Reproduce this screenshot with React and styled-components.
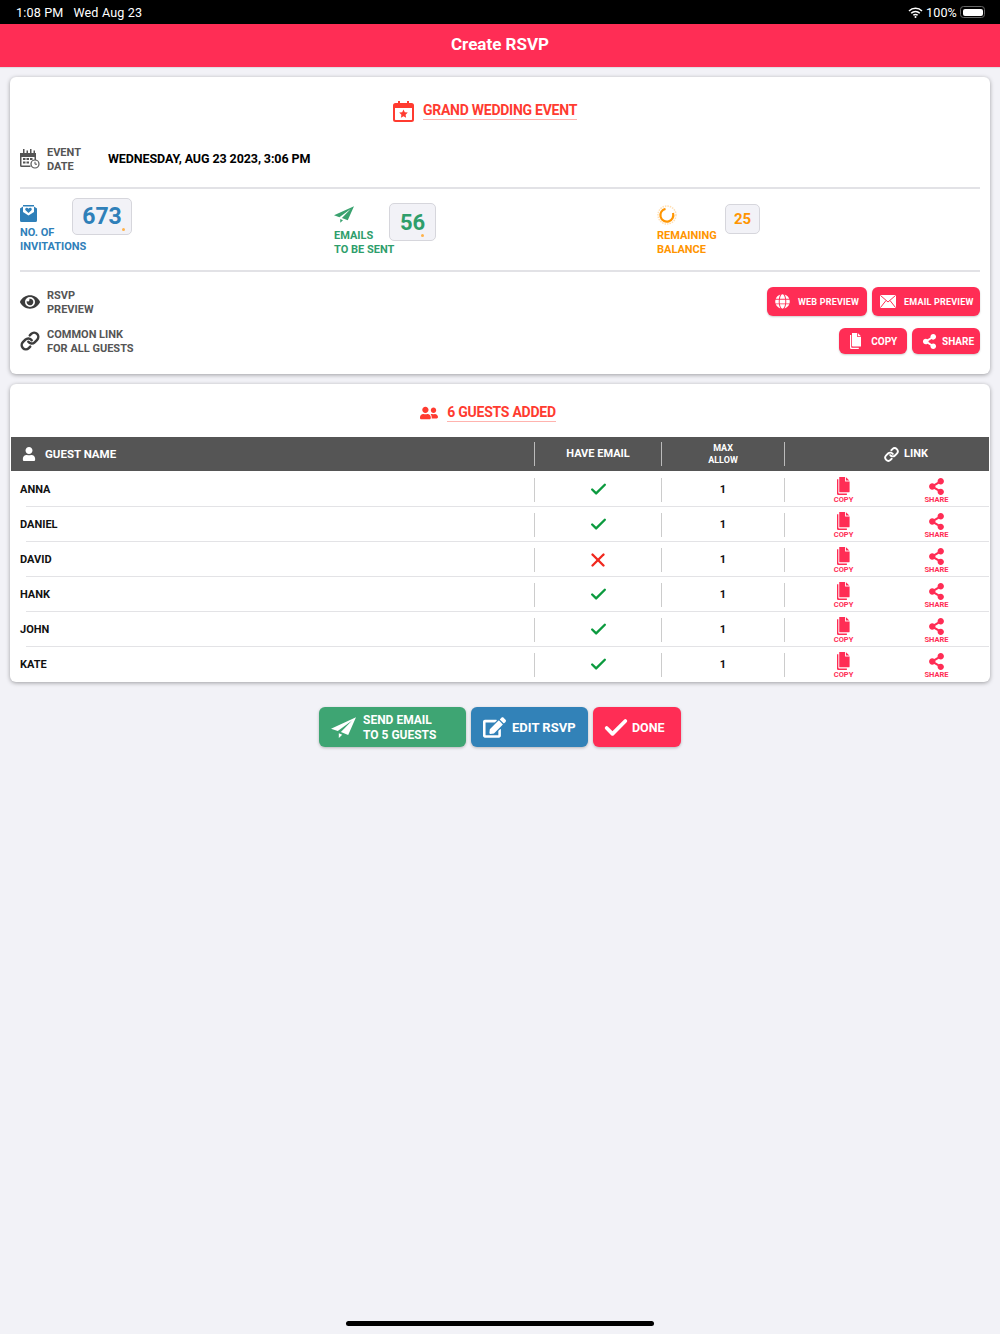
import React from 'react';
import styled, { createGlobalStyle } from 'styled-components';
import { FaEye, FaUser, FaUserFriends, FaShareAlt, FaGlobe, FaEdit } from 'react-icons/fa';
import { Check, X, Link as LinkIcon } from 'lucide-react';

const RED = '#ff2d55';
const display = `"Roboto", "Liberation Sans", sans-serif`;

const guests = [
    { name: 'ANNA', email: true },
    { name: 'DANIEL', email: true },
    { name: 'DAVID', email: false },
    { name: 'HANK', email: true },
    { name: 'JOHN', email: true },
    { name: 'KATE', email: true },
];

const PlaneIcon = ({ size, color }) => (
    <svg width={size} height={size * 0.85} viewBox="0 0 24 20">
        <path fill={color} d="M24 0 L0 11 L6.5 13.2 L20 3.5 L9.5 14.2 L16.5 17 Z M7.5 15.5 L7.5 20 L10.8 16.8 Z" />
    </svg>
);

const CalendarStarIcon = () => (
    <svg width="21" height="21" viewBox="0 0 21 21">
        <path fill="#ff3b30" d="M5 0h2v2h7V0h2v2h2.5A2.5 2.5 0 0 1 21 4.500V18.500A2.500 2.500 0 0 1 18.500 21H2.500A2.500 2.500 0 0 1 0 18.500V4.500A2.500 2.500 0 0 1 2.500 2H5zM2 7v11.500c0 .3.2.5.5.5h16c.3 0 .5-.2.5-.5V7z" />
        <path fill="#ff3b30" d="M10.500 8.500l1.300 2.700 3 .4-2.200 2.100.5 3-2.600-1.400-2.600 1.400.5-3-2.200-2.100 3-.4z" />
    </svg>
);

const CalendarClockIcon = () => (
    <svg width="20" height="20" viewBox="0 0 20 20" fill="#555">
        <rect x="3" y="0" width="1.500" height="4" />
        <rect x="6.500" y="1.500" width="1.500" height="3" />
        <rect x="10" y="0" width="1.500" height="4" />
        <rect x="13.500" y="1.500" width="1.500" height="3" />
        <path d="M0 4h16v7h-1.500V8h-13v8.500h9V18H1.500A1.500 1.500 0 0 1 0 16.500z" />
        <rect x="3" y="9" width="2.500" height="2" />
        <rect x="6.500" y="9" width="2.500" height="2" />
        <rect x="10" y="9" width="2.500" height="2" />
        <rect x="3" y="12.500" width="2.500" height="2" />
        <rect x="6.500" y="12.500" width="2.500" height="2" />
        <circle cx="15" cy="15" r="4" fill="#fff" stroke="#555" strokeWidth="1.200" />
        <path d="M15 12.800v2.400h2" fill="none" stroke="#555" strokeWidth="1" />
    </svg>
);

const InviteIcon = () => (
    <svg width="17" height="17" viewBox="0 0 17 17">
        <path fill="#2f80b9" d="M0 3.500L3 1.500V0h11v1.500l3 2V15.500A1.500 1.500 0 0 1 15.500 17H1.500A1.500 1.500 0 0 1 0 15.500z" />
        <path fill="#fff" d="M3 1.500h11v5.500L8.500 10.500 3 7z" />
        <path fill="#2f80b9" d="M8.500 8L5.600 5.300C4.700 4.300 5.400 2.800 6.700 2.800c.8 0 1.400.4 1.800 1 .4-.6 1-1 1.800-1 1.300 0 2 1.500 1.100 2.500z" />
    </svg>
);

const BalanceIcon = () => (
    <svg width="20" height="20" viewBox="0 0 20 20" fill="none">
        <circle cx="10" cy="10" r="9" stroke="#ff9500" strokeOpacity=".3" strokeWidth="1.500" strokeDasharray="1.500 1" />
        <path d="M8.500 3.800A6.500 6.500 0 1 0 16 8" stroke="#ff9500" strokeWidth="2.200" />
    </svg>
);

const CopyDocIcon = ({ size, color }) => (
    <svg width={size * 0.7} height={size} viewBox="0 0 14 20">
        <path fill={color} d="M2.500 0h6.500v5h5v11a1 1 0 0 1-1 1H3.500a1 1 0 0 1-1-1zM10 .3L13.700 4H10z" />
        <path fill={color} d="M0 2.500h1.500v15c0 .5.400 .9.900 .9H11V20H1.500A1.500 1.500 0 0 1 0 18.500z" />
    </svg>
);

const EnvelopeIcon = () => (
    <svg width="16" height="13" viewBox="0 0 16 13">
        <rect width="16" height="13" rx="1" fill="#fff" />
        <path d="M0.500 0.500L8 7l7.500-6.500M0.500 12.500L6 5.500M15.500 12.500L10 5.500" fill="none" stroke={RED} strokeWidth="1" />
    </svg>
);

function StatusBarIcons() {
    return (
        <>
            <svg width="15" height="11" viewBox="0 0 15 11">
                <path d="M1 4a9.200 9.200 0 0 1 13 0M3.200 6.200a6.100 6.100 0 0 1 8.600 0M5.300 8.300a3.100 3.100 0 0 1 4.400 0" fill="none" stroke="#fff" strokeWidth="1.500" />
                <circle cx="7.500" cy="10" r="1" fill="#fff" />
            </svg>
            <StatusText>100%</StatusText>
            <Battery><BatteryFill /></Battery>
        </>
    );
}

function Stat({ icon, color, width, textTop, iconH, boxTop, boxW, boxH, numSize, value, lines, dotRight }) {
    return (
        <StatItem>
            <StatText $width={width} $top={textTop} $color={color}>
                <StatIcon $h={iconH}>{icon}</StatIcon>
                {lines.map((l) => <div key={l}>{l}</div>)}
            </StatText>
            <StatBox $top={boxTop} $w={boxW} $h={boxH} $color={color} $size={numSize}>
                {value}
                {dotRight && <StatDot $right={dotRight} />}
            </StatBox>
        </StatItem>
    );
}

export default function App() {
    return (
        <Page>
            <GlobalStyle />
            <StatusBar>
                <StatusGroup>
                    <StatusText>1:08 PM</StatusText>
                    <StatusText>Wed Aug 23</StatusText>
                </StatusGroup>
                <StatusRight><StatusBarIcons /></StatusRight>
            </StatusBar>
            <Header>Create RSVP</Header>

            <Card>
                <TitleRow $height={66} $top={2} $shift={30}>
                    <CalendarStarIcon />
                    <Title>GRAND WEDDING EVENT</Title>
                </TitleRow>
                <EventRow>
                    <CalendarClockIcon />
                    <SmallLabel $width={54}>EVENT<br />DATE</SmallLabel>
                    <EventDate>WEDNESDAY, AUG 23 2023, 3:06 PM</EventDate>
                </EventRow>
                <Divider />
                <StatsRow>
                    <Stat icon={<InviteIcon />} color="#2f80b9" width={52} textTop={7} iconH={21} boxTop={0} boxW={60} boxH={37} numSize={23} value="673" lines={['NO. OF', 'INVITATIONS']} dotRight={6} />
                    <Stat icon={<PlaneIcon size={20} color="#3aa26f" />} color="#2e9e6b" width={55} textTop={8} iconH={23} boxTop={5} boxW={47} boxH={38} numSize={22} value="56" lines={['EMAILS', 'TO BE SENT']} dotRight={11} />
                    <Stat icon={<BalanceIcon />} color="#ff9500" width={68} textTop={7} iconH={24} boxTop={6} boxW={35} boxH={30} numSize={15} value="25" lines={['REMAINING', 'BALANCE']} />
                </StatsRow>
                <Divider />
                <ActionRow $top={15}>
                    <ActionLabel>
                        <FaEye size={20} color="#3c3c3c" />
                        <SmallLabel>RSVP<br />PREVIEW</SmallLabel>
                    </ActionLabel>
                    <ButtonGroup>
                        <PinkButton $w={100} $h={29} $pad={8} $gap={8} $small><FaGlobe size={15} />WEB PREVIEW</PinkButton>
                        <PinkButton $w={108} $h={29} $pad={8} $gap={8} $small><EnvelopeIcon />EMAIL PREVIEW</PinkButton>
                    </ButtonGroup>
                </ActionRow>
                <ActionRow $top={11}>
                    <ActionLabel>
                        <LinkIcon size={20} color="#3c3c3c" strokeWidth={3} />
                        <SmallLabel>COMMON LINK<br />FOR ALL GUESTS</SmallLabel>
                    </ActionLabel>
                    <ButtonGroup>
                        <PinkButton $w={68} $h={26} $pad={11} $gap={10}><CopyDocIcon size={16} color="#fff" />COPY</PinkButton>
                        <PinkButton $w={68} $h={26} $pad={10} $gap={5}><FaShareAlt size={15} />SHARE</PinkButton>
                    </ButtonGroup>
                </ActionRow>
            </Card>

            <TableCard>
                <TitleRow $height={53} $top={4} $shift={24}>
                    <FaUserFriends size={18} color="#ff3b30" />
                    <Title>6 GUESTS ADDED</Title>
                </TitleRow>
                <TableHead>
                    <NameHead><FaUser size={14} />GUEST NAME</NameHead>
                    <HeadCell>HAVE EMAIL</HeadCell>
                    <HeadCell $small>MAX<br />ALLOW</HeadCell>
                    <HeadCell $offset={38}><LinkIcon size={15} strokeWidth={3} />LINK</HeadCell>
                </TableHead>
                {guests.map((g) => (
                    <GuestRow key={g.name}>
                        <GuestName>{g.name}</GuestName>
                        <BodyCell>
                            {g.email
                                ? <Check size={19} color="#0b9a3e" strokeWidth={3} />
                                : <X size={22} color="#f0281e" strokeWidth={2.6} />}
                        </BodyCell>
                        <BodyCell><Count>1</Count></BodyCell>
                        <LinkCell>
                            <LinkAction><CopyDocIcon size={18} color={RED} />COPY</LinkAction>
                            <LinkAction><FaShareAlt size={17} />SHARE</LinkAction>
                        </LinkCell>
                    </GuestRow>
                ))}
            </TableCard>

            <Footer>
                <FooterButton $bg="#3ea573" $w={147} $size={12} $gap={7}>
                    <PlaneIcon size={25} color="#fff" />
                    <span>SEND EMAIL<br />TO 5 GUESTS</span>
                </FooterButton>
                <FooterButton $bg="#3282b8" $w={117} $size={13} $gap={6}>
                    <FaEdit size={23} />
                    <span>EDIT RSVP</span>
                </FooterButton>
                <FooterButton $bg={RED} $w={88} $size={12.5} $gap={2}>
                    <DoneCheck size={28} strokeWidth={3.2} />
                    <span>DONE</span>
                </FooterButton>
            </Footer>
            <HomeIndicator />
        </Page>
    );
}

const GlobalStyle = createGlobalStyle`
    html, body { margin: 0; padding: 0; background: #f2f2f7; }
`;

const Page = styled.div`
    position: relative;
    width: 1000px;
    height: 1334px;
    overflow: hidden;
    background: #f2f2f7;
    font-family: ${display};
    font-weight: 700;
`;

const StatusBar = styled.div`
    height: 24px;
    background: #000;
    display: flex;
    justify-content: space-between;
    align-items: center;
    padding: 0 15px 0 16px;
`;

const StatusGroup = styled.div`
    display: flex;
    gap: 10px;
`;

const StatusRight = styled.div`
    display: flex;
    align-items: center;
    gap: 3px;
`;

const StatusText = styled.span`
    color: #fff;
    font: 400 12.600px "Roboto", sans-serif;
    letter-spacing: 0.15px;
`;

const Battery = styled.div`
    width: 25px;
    height: 12px;
    box-sizing: border-box;
    padding: 1.500px;
    border: 1px solid #666;
    border-radius: 3.500px;
`;

const BatteryFill = styled.div`
    height: 100%;
    background: #fff;
    border-radius: 2px;
`;

const Header = styled.div`
    height: 43px;
    padding-bottom: 3px;
    box-sizing: border-box;
    background: ${RED};
    color: #fff;
    font-size: 17px;
    display: flex;
    align-items: center;
    justify-content: center;
    box-shadow: 0 1px 1px rgba(0, 0, 0, 0.08);
`;

const Card = styled.section`
    margin: 10px 10px 0;
    padding: 0 10px 19px;
    background: #fff;
    border-radius: 6px;
    box-shadow: 0 1px 4px rgba(0, 0, 0, 0.35);
`;

const TableCard = styled(Card)`
    padding: 0 1px;
`;

const TitleRow = styled.div`
    height: ${(p) => p.$height}px;
    box-sizing: border-box;
    padding: ${(p) => p.$top}px ${(p) => p.$shift}px 0 0;
    display: flex;
    align-items: center;
    justify-content: center;
    gap: 9px;
`;

const Title = styled.h2`
    margin: 0;
    color: #ff3b30;
    font-size: 14px;
    font-weight: 700;
    line-height: 17px;
    letter-spacing: -0.25px;
    border-bottom: 1px solid #ffb3ae;
`;

const EventRow = styled.div`
    height: 32px;
    margin-bottom: 12px;
    display: flex;
    align-items: center;
    gap: 7px;
`;

const SmallLabel = styled.div`
    width: ${(p) => (p.$width ? `${p.$width}px` : 'auto')};
    padding-top: 2px;
    color: #555;
    font-size: 11px;
    line-height: 14px;
`;

const EventDate = styled.div`
    padding-bottom: 2px;
    color: #000;
    font-size: 12.500px;
    letter-spacing: -0.1px;
`;

const Divider = styled.hr`
    margin: 0;
    border: 0;
    height: 2px;
    background: #e2e2e6;
`;

const StatsRow = styled.div`
    height: 81px;
    padding-top: 9px;
    box-sizing: border-box;
    display: grid;
    grid-template-columns: 314px 323px 1fr;
`;

const StatItem = styled.div`
    display: flex;
    align-items: flex-start;
`;

const StatText = styled.div`
    width: ${(p) => p.$width}px;
    padding-top: ${(p) => p.$top}px;
    color: ${(p) => p.$color};
    font-size: 11px;
    line-height: 14px;
    white-space: nowrap;
`;

const StatIcon = styled.div`
    height: ${(p) => p.$h}px;
`;

const StatBox = styled.div`
    position: relative;
    margin-top: ${(p) => p.$top}px;
    width: ${(p) => p.$w}px;
    height: ${(p) => p.$h}px;
    box-sizing: border-box;
    display: flex;
    align-items: center;
    justify-content: center;
    background: #f2f2f7;
    border: 1px solid #d6d6dc;
    border-radius: 5px;
    color: ${(p) => p.$color};
    font-size: ${(p) => p.$size}px;
`;

const StatDot = styled.span`
    position: absolute;
    right: ${(p) => p.$right}px;
    bottom: 3px;
    width: 3px;
    height: 3px;
    border-radius: 50%;
    background: #ffb24a;
`;

const ActionRow = styled.div`
    margin-top: ${(p) => p.$top}px;
    height: ${(p) => (p.$top === 15 ? 29 : 28)}px;
    display: flex;
    justify-content: space-between;
    align-items: center;
`;

const ActionLabel = styled.div`
    display: flex;
    align-items: center;
    gap: 7px;
`;

const ButtonGroup = styled.div`
    display: flex;
    gap: 5px;
`;

const PinkButton = styled.button`
    width: ${(p) => p.$w}px;
    height: ${(p) => p.$h}px;
    padding: 0 0 0 ${(p) => p.$pad}px;
    border: 0;
    border-radius: 6px;
    background: ${RED};
    color: #fff;
    font-family: ${display};
    font-weight: 700;
    font-size: ${(p) => (p.$small ? 9 : 10)}px;
    letter-spacing: ${(p) => (p.$small ? 0.2 : 0)}px;
    display: flex;
    align-items: center;
    gap: ${(p) => p.$gap}px;
    box-shadow: 0 1px 2px rgba(0, 0, 0, 0.2);
`;

const tableColumns = '523px 127px 123px 1fr';

const TableHead = styled.div`
    height: 34px;
    margin-bottom: 1px;
    background: #555;
    display: grid;
    grid-template-columns: ${tableColumns};
    align-items: center;
    color: #fff;
    font-size: 11.500px;
`;

const NameHead = styled.div`
    display: flex;
    align-items: center;
    gap: 9px;
    padding-left: 11px;
`;

const HeadCell = styled.div`
    height: 24px;
    box-sizing: border-box;
    padding-left: ${(p) => p.$offset || 0}px;
    border-left: 1px solid #bbb;
    display: flex;
    align-items: center;
    justify-content: center;
    gap: 5px;
    text-align: center;
    font-size: ${(p) => (p.$small ? 9 : 11)}px;
    line-height: 12px;
`;

const GuestRow = styled.div`
    position: relative;
    height: 35px;
    display: grid;
    grid-template-columns: ${tableColumns};
    align-items: center;

    &:not(:last-child)::after {
        content: "";
        position: absolute;
        left: 15px;
        right: 0;
        bottom: 0;
        height: 1px;
        background: #e3e3e6;
    }
`;

const GuestName = styled.div`
    padding-left: 9px;
    color: #111;
    font-size: 11px;
`;

const BodyCell = styled.div`
    height: 24px;
    border-left: 1px solid #ccc;
    display: flex;
    align-items: center;
    justify-content: center;
`;

const Count = styled.span`
    color: #111;
    font-size: 11px;
`;

const LinkCell = styled(BodyCell)`
    justify-content: flex-start;
    padding-left: 12px;
`;

const LinkAction = styled.div`
    width: 93px;
    display: flex;
    flex-direction: column;
    align-items: center;
    gap: 1px;
    margin-top: 2px;
    color: ${RED};
    font-size: 7.500px;
    line-height: 8px;
`;

const Footer = styled.div`
    margin-top: 25px;
    display: flex;
    justify-content: center;
    gap: 5px;
`;

const FooterButton = styled.button`
    width: ${(p) => p.$w}px;
    height: 40px;
    padding: 1px 0 0 12px;
    border: 0;
    border-radius: 6px;
    background: ${(p) => p.$bg};
    color: #fff;
    font-family: ${display};
    font-weight: 700;
    font-size: ${(p) => p.$size}px;
    line-height: 15px;
    text-align: left;
    display: flex;
    align-items: center;
    gap: ${(p) => p.$gap}px;
    box-shadow: 0 1px 3px rgba(0, 0, 0, 0.25);
`;

const DoneCheck = styled(Check)`
    margin-left: -3px;
`;

const HomeIndicator = styled.div`
    position: absolute;
    left: 346px;
    bottom: 8px;
    width: 308px;
    height: 5px;
    border-radius: 3px;
    background: #000;
`;
